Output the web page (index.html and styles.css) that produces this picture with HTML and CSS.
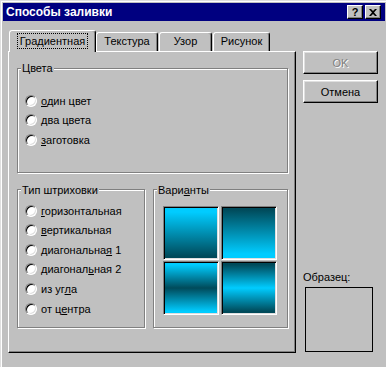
FILE: index.html
```html
<!DOCTYPE html>
<html lang="ru">
<head>
  <meta charset="UTF-8" />
  <title>Способы заливки</title>
  <link rel="stylesheet" href="styles.css">
</head>
<body>
  <div class="window">
    <div class="titlebar">
      <span class="title">Способы заливки</span>
      <div class="caption-buttons">
        <span class="caption-btn help">?</span>
        <span class="caption-btn">
          <svg width="8" height="7" viewBox="0 0 8 7"><path d="M0 0h2l2 2 2-2h2L5 3.5 8 7H6L4 5 2 7H0l3-3.5z" fill="#000"/></svg>
        </span>
      </div>
    </div>

    <div class="dialog">
      <div class="main">
        <div class="tabs">
          <div class="tab active"><span class="focus">Градиентная</span></div>
          <div class="tab tab-texture">Текстура</div>
          <div class="tab tab-pattern">Узор</div>
          <div class="tab tab-picture">Рисунок</div>
        </div>

        <div class="panel">
          <fieldset class="group colors">
            <legend>Цвета</legend>
            <div class="options">
              <label class="radio"><span class="dot"></span><span><u>о</u>дин цвет</span></label>
              <label class="radio"><span class="dot"></span><span><u>д</u>ва цвета</span></label>
              <label class="radio"><span class="dot"></span><span><u>з</u>аготовка</span></label>
            </div>
          </fieldset>

          <div class="row">
            <fieldset class="group hatch">
              <legend>Тип штриховки</legend>
              <div class="options">
                <label class="radio"><span class="dot"></span><span><u>г</u>оризонтальная</span></label>
                <label class="radio"><span class="dot"></span><span><u>в</u>ертикальная</span></label>
                <label class="radio"><span class="dot"></span><span>диагональна<u>я</u> 1</span></label>
                <label class="radio"><span class="dot"></span><span>диагонал<u>ь</u>ная 2</span></label>
                <label class="radio"><span class="dot"></span><span>из уг<u>л</u>а</span></label>
                <label class="radio"><span class="dot"></span><span>от ц<u>е</u>нтра</span></label>
              </div>
            </fieldset>

            <fieldset class="group variants">
              <legend>Вари<u>а</u>нты</legend>
              <div class="swatches">
                <div class="swatch down"></div>
                <div class="swatch up"></div>
                <div class="swatch dark-middle"></div>
                <div class="swatch light-middle"></div>
              </div>
            </fieldset>
          </div>
        </div>
      </div>

      <div class="side">
        <div class="btn disabled">OK</div>
        <div class="btn">Отмена</div>
        <div class="sample">
          <div class="sample-label">Образец:</div>
          <div class="sample-box"></div>
        </div>
      </div>
    </div>
  </div>
</body>
</html>
```

FILE: styles.css
```css
:root {
  --face: #c0c0c0;
  --light: #dfdfdf;
  --shadow: #808080;
  --title: #000080;
  --cyan: #00ccff;
  --teal: #004a5a;
}

* {
  margin: 0;
  padding: 0;
  box-sizing: border-box;
}

body {
  background: var(--face);
  font-family: "Liberation Sans", Arial, sans-serif;
  font-size: 11px;
  color: #000;
}

.window {
  width: 386px;
  height: 367px;
  background: var(--face);
  border-left: 1px solid var(--light);
  border-top: 1px solid var(--light);
  box-shadow: inset 1px 1px 0 #fff;
  padding: 2px 1px 0 2px;
}

/* title bar */
.titlebar {
  height: 18px;
  background: var(--title);
  color: #fff;
  display: flex;
  align-items: center;
  justify-content: space-between;
  padding: 0 4px 0 3px;
}

.title {
  font-weight: bold;
  font-size: 12px;
}

.caption-buttons {
  display: flex;
  gap: 2px;
}

.caption-btn {
  width: 16px;
  height: 14px;
  background: var(--face);
  border: 1px solid;
  border-color: #fff #000 #000 #fff;
  box-shadow: inset -1px -1px 0 var(--shadow);
  display: flex;
  align-items: center;
  justify-content: center;
  color: #000;
}

.caption-btn.help {
  font-weight: bold;
  font-size: 11px;
  line-height: 12px;
}

/* dialog body */
.dialog {
  display: flex;
  gap: 7px;
  padding: 9px 0 0 5px;
}

.main {
  width: 288px;
}

.tabs {
  display: flex;
  align-items: flex-end;
  height: 21px;
  padding-left: 1px;
}

.tab {
  height: 19px;
  border: 1px solid;
  border-bottom: 0;
  border-color: #fff #000 transparent #fff;
  border-radius: 3px 3px 0 0;
  box-shadow: inset -1px 0 0 var(--shadow);
  text-align: center;
  line-height: 17px;
  margin-right: 1px;
}

.tab.active {
  width: 87px;
  height: 22px;
  margin: 0 0 -1px 0;
  padding-top: 2px;
  position: relative;
  z-index: 1;
  background: var(--face);
  line-height: 13px;
}

.tab-texture { width: 62px; }
.tab-pattern { width: 53px; }
.tab-picture { width: 57px; }

.focus {
  display: inline-block;
  border: 1px dotted #000;
  padding: 1px 2px 0;
}

.panel {
  height: 302px;
  border: 1px solid;
  border-color: #fff #000 #000 #fff;
  box-shadow: inset -1px -1px 0 var(--shadow);
  padding: 9px 7px 24px 8px;
}

/* group boxes */
.group {
  border: 1px solid var(--shadow);
  box-shadow: inset 1px 1px 0 #fff, 1px 1px 0 #fff;
  padding: 0 0 0 7px;
  min-width: 0;
}

.group legend {
  margin-left: -4px;
  padding: 0 1px;
  line-height: 14px;
  background: var(--face);
}

.colors {
  padding-bottom: 22px;
}

.colors .options {
  margin-top: 16px;
}

.row {
  display: flex;
  gap: 8px;
  margin-top: 10px;
}

.hatch {
  width: 128px;
  padding-bottom: 9px;
}

.hatch .options {
  margin-top: 4px;
}

.variants {
  flex: 1;
}

.radio {
  display: flex;
  align-items: center;
  gap: 4px;
  height: 19.6px;
}

.dot {
  width: 12px;
  height: 12px;
  border-radius: 50%;
  background: #fff;
  border: 1px solid;
  border-color: var(--shadow) #fff #fff var(--shadow);
  box-shadow: inset 1px 1px 0 #000, inset -1px -1px 0 var(--light);
}

/* gradient variants */
.swatches {
  display: grid;
  grid-template-columns: 56px 56px;
  grid-auto-rows: 54px;
  gap: 1px 2px;
  margin: 9px 0 0 2px;
}

.swatch {
  border: 1px solid;
  border-color: var(--shadow) #fff #fff var(--shadow);
  box-shadow: inset 1px 1px 0 #000, inset -1px -1px 0 var(--light);
}

.swatch.down { background: linear-gradient(var(--cyan) 10%, var(--teal) 95%); }
.swatch.up { background: linear-gradient(var(--teal) 5%, var(--cyan) 90%); }
.swatch.dark-middle { background: linear-gradient(var(--cyan) 5%, var(--teal) 50%, var(--cyan) 95%); }
.swatch.light-middle { background: linear-gradient(var(--teal) 5%, var(--cyan) 50%, var(--teal) 95%); }

/* right column */
.side {
  width: 75px;
  display: flex;
  flex-direction: column;
  padding-top: 21px;
}

.btn {
  height: 23px;
  border: 1px solid;
  border-color: #fff #000 #000 #fff;
  box-shadow: inset -1px -1px 0 var(--shadow), inset 1px 1px 0 var(--light);
  display: flex;
  align-items: center;
  justify-content: center;
  margin-bottom: 6px;
}

.btn.disabled {
  color: var(--shadow);
  text-shadow: 1px 1px 0 #fff;
}

.sample {
  margin-top: auto;
  padding-bottom: 1px;
}

.sample-label {
  line-height: 14px;
  margin-bottom: 3px;
}

.sample-box {
  width: 68px;
  height: 65px;
  margin-left: 2px;
  border: 1px solid #000;
}
```
